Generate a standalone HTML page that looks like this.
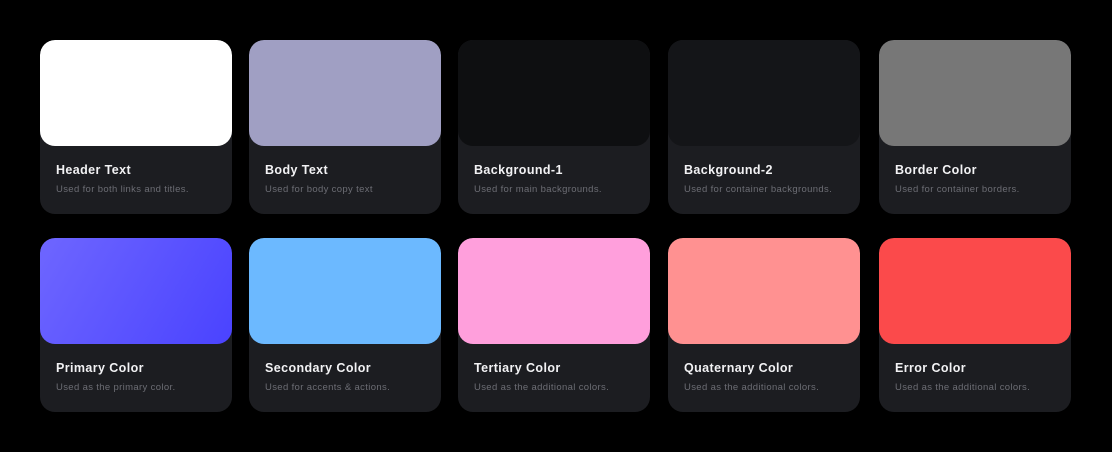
<!DOCTYPE html>
<html><head><style>
body{margin:0;width:1112px;height:452px;background:#000;font-family:"Liberation Sans",sans-serif;position:relative;overflow:hidden}
.c{position:absolute;width:192px;height:174px;background:#1c1d21;border-radius:15px;overflow:hidden}
.s{height:106px;border-radius:15px}
.t{position:absolute;left:16px;top:123px;color:#f2f2f4;font-weight:bold;font-size:12.5px;letter-spacing:0.4px}
.d{position:absolute;left:16px;top:144px;color:#6c6d74;font-size:9.5px;letter-spacing:0.35px}
</style></head><body>
<div class="c" style="left:40px;top:40px"><div class="s" style="background:#fff"></div><div class="t">Header Text</div><div class="d">Used for both links and titles.</div></div>
<div class="c" style="left:249px;top:40px"><div class="s" style="background:#a09fc3"></div><div class="t">Body Text</div><div class="d">Used for body copy text</div></div>
<div class="c" style="left:458px;top:40px"><div class="s" style="background:#0e0f11"></div><div class="t">Background-1</div><div class="d">Used for main backgrounds.</div></div>
<div class="c" style="left:668px;top:40px"><div class="s" style="background:#141518"></div><div class="t">Background-2</div><div class="d">Used for container backgrounds.</div></div>
<div class="c" style="left:879px;top:40px"><div class="s" style="background:#777"></div><div class="t">Border Color</div><div class="d">Used for container borders.</div></div>
<div class="c" style="left:40px;top:238px"><div class="s" style="background:linear-gradient(120deg,#6e66ff,#4a43ff)"></div><div class="t">Primary Color</div><div class="d">Used as the primary color.</div></div>
<div class="c" style="left:249px;top:238px"><div class="s" style="background:#6cb9ff"></div><div class="t">Secondary Color</div><div class="d">Used for accents &amp; actions.</div></div>
<div class="c" style="left:458px;top:238px"><div class="s" style="background:#ff9fdc"></div><div class="t">Tertiary Color</div><div class="d">Used as the additional colors.</div></div>
<div class="c" style="left:668px;top:238px"><div class="s" style="background:#ff9191"></div><div class="t">Quaternary Color</div><div class="d">Used as the additional colors.</div></div>
<div class="c" style="left:879px;top:238px"><div class="s" style="background:#fb4a4b"></div><div class="t">Error Color</div><div class="d">Used as the additional colors.</div></div>
</body></html>
